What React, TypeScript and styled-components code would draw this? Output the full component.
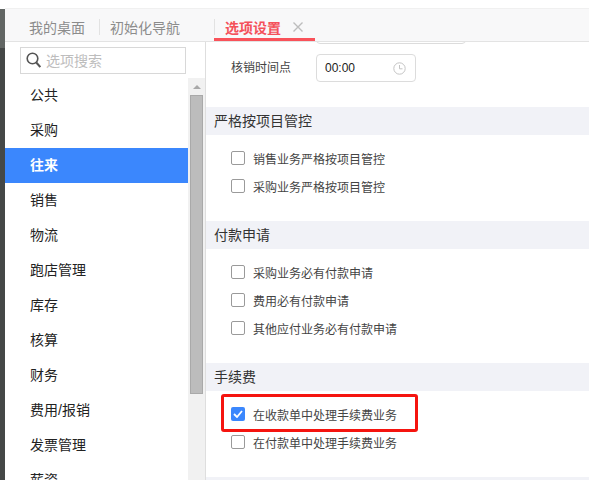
import React from "react";
import styled, { createGlobalStyle } from "styled-components";

const Global = createGlobalStyle`
  html, body { margin: 0; padding: 0; background: #fff; }
  body { font-family: "Liberation Sans", "Noto Sans CJK SC", sans-serif; }
`;
const Page = styled.div`
  width: 589px; height: 480px; overflow: hidden; display: flex; flex-direction: column; background: #fff; position: relative;
`;
const TopGap = styled.div`height: 8px; background: #fff; flex: none;`;
const Main = styled.div`flex: 1; display: flex; min-height: 0;`;
const DarkStrip = styled.div`
  width: 5px; flex: none; margin-top: 1px; background: linear-gradient(#626664 0, #626664 39px, #454847 39px);
`;
const Right = styled.div`flex: 1; min-width: 0; display: flex; flex-direction: column;`;
const TabBar = styled.div`
  height: 34px; flex: none; display: flex; align-items: center; background: #f8f8f9; box-sizing: border-box;
  border-top: 1px solid #f0f0f0; border-bottom: 1px solid #e3e3e3; padding: 4px 0 0 24px;
`;
const Tab = styled.div<{ $active?: boolean }>`
  font-size: 14px; color: ${p => p.$active ? "#f4505a" : "#8c8c8c"}; font-weight: ${p => p.$active ? 700 : 400};
`;
const Sep = styled.div<{ $before: number; $after: number }>`
  width: 1px; height: 16px; background: #e2e2e2; flex: none;
  margin: 0 ${p => p.$after}px 0 ${p => p.$before}px;
`;
const ActiveTab = styled.div`
  height: 100%; display: flex; align-items: center; width: 101px; box-sizing: border-box; padding: 2px 0 0 11px;
  border-bottom: 3px solid #f9525a; gap: 12px; flex: none;
`;
const Body = styled.div`flex: 1; display: flex; min-height: 0;`;
const Sidebar = styled.div`
  width: 200px; flex: none; display: flex; flex-direction: column; border-right: 1px solid #dedede; box-sizing: content-box;
`;
const SearchBox = styled.div`
  width: 166px; height: 27px; margin: 5px 0 0 15px; border: 1px solid #d8d8d8; display: flex; align-items: center;
  gap: 5px; padding: 0 0 1px 5px; box-sizing: border-box; font-size: 14px; color: #bdbdbd; flex: none;
`;
const SideMain = styled.div`flex: 1; display: flex; min-height: 0; margin-top: 4px; overflow: hidden;`;
const Menu = styled.div`width: 183px; flex: none;`;
const MenuItem = styled.div<{ $active?: boolean }>`
  height: 35px; line-height: 35px; padding-left: 25px; font-size: 14px;
  font-weight: ${p => p.$active ? 700 : 400};
  color: ${p => p.$active ? "#fff" : "#222"}; background: ${p => p.$active ? "#3b87fd" : "transparent"};
`;
const Track = styled.div`
  width: 17px; flex: none; background: #f1f1f1; display: flex; flex-direction: column; align-items: center;
`;
const Arrow = styled.div`
  flex: none; height: 17px; width: 100%; display: flex; align-items: center; justify-content: center;
  &::before { content: ""; border: 4px solid transparent; border-top: 0; border-bottom: 4px solid #a8a8a8; }
`;
const Thumb = styled.div`
  width: 13px; height: 299px; background: #bcbcbc; border: 1px solid #a9a9a9; box-sizing: border-box; flex: none;
`;
const Content = styled.div`flex: 1; min-width: 0; display: flex; flex-direction: column; overflow: hidden;`;
const TimeRow = styled.div`
  height: 65px; flex: none; position: relative; display: flex; align-items: flex-start; padding: 12px 0 0 25px; gap: 25px; box-sizing: border-box;
  font-size: 12px; color: #444;
`;
const ClippedInput = styled.div`
  position: absolute; left: 110px; top: -20px; width: 150px; height: 22px; border: 1px solid #dcdcdc; border-radius: 4px; box-sizing: border-box;
`;
const RowLabel = styled.div`line-height: 28px;`;
const TimeInput = styled.div`
  width: 100px; height: 28px; border: 1px solid #dcdcdc; border-radius: 4px; display: flex; align-items: center;
  justify-content: space-between; padding: 0 9px 0 8px; font-size: 12px; color: #222; box-sizing: border-box;
`;
const SectionTitle = styled.div`
  height: 28px; flex: none; line-height: 28px; background: #f1f2f7; padding-left: 8px; font-size: 14px; color: #333;
`;
const SectionBody = styled.div<{ $h: number }>`
  height: ${p => p.$h}px; flex: none; padding-top: 9px; box-sizing: border-box; display: flex; flex-direction: column;
`;
const CheckRow = styled.div`
  height: 28px; display: flex; align-items: center; padding-left: 25px; gap: 8px; font-size: 12px; color: #444;
`;
const Box = styled.span<{ $on?: boolean }>`
  width: 14px; height: 14px; flex: none; border-radius: 2px; display: flex; align-items: center; justify-content: center;
  box-sizing: border-box;
  ${p => p.$on ? "background:#3b87fd;" : "border: 1px solid #9a9a9a;"}
`;
const Highlight = styled.div`
  position: absolute; left: 221px; top: 394px; width: 197px; height: 38px; border: 3px solid #f5140f;
  border-radius: 3px; box-sizing: border-box;
`;
const Check = ({ on, children }: { on?: boolean; children: React.ReactNode }) => (
  <CheckRow>
    <Box $on={on}>
      {on && <svg width="10" height="8" viewBox="0 0 10 8"><path d="M1 4l3 3 5-6" stroke="#fff" strokeWidth="1.8" fill="none" /></svg>}
    </Box>
    {children}
  </CheckRow>
);
const items = ["公共","采购","往来","销售","物流","跑店管理","库存","核算","财务","费用/报销","发票管理","薪资"];
export default function App() {
  return (
    <Page>
      <Global />
      <TopGap />
      <Main>
        <DarkStrip />
        <Right>
          <TabBar>
            <Tab>我的桌面</Tab>
            <Sep $before={14} $after={10} />
            <Tab>初始化导航</Tab>
            <Sep $before={34} $after={-1} />
            <ActiveTab>
              <Tab $active>选项设置</Tab>
              <svg width="10" height="10" viewBox="0 0 10 10"><path d="M0.5 0.5l9 9M9.5 0.5l-9 9" stroke="#bdbdbd" strokeWidth="1.4" /></svg>
            </ActiveTab>
          </TabBar>
          <Body>
            <Sidebar>
              <SearchBox>
                <svg width="15" height="16" viewBox="0 0 15 16"><circle cx="6.5" cy="6.5" r="5.3" stroke="#555" strokeWidth="1.6" fill="none" /><path d="M10.3 10.5l4 4.5" stroke="#555" strokeWidth="2" /></svg>
                选项搜索
              </SearchBox>
              <SideMain>
                <Menu>{items.map((t, i) => <MenuItem key={t} $active={i === 2}>{t}</MenuItem>)}</Menu>
                <Track><Arrow /><Thumb /></Track>
              </SideMain>
            </Sidebar>
            <Content>
              <TimeRow>
                <ClippedInput />
                <RowLabel>核销时间点</RowLabel>
                <TimeInput>00:00
                  <svg width="13" height="13" viewBox="0 0 13 13"><circle cx="6.5" cy="6.5" r="5.7" stroke="#c4c4c4" fill="none" /><path d="M6.5 3v3.8h3" stroke="#c4c4c4" fill="none" /></svg>
                </TimeInput>
              </TimeRow>
              <SectionTitle>严格按项目管控</SectionTitle>
              <SectionBody $h={86}>
                <Check>销售业务严格按项目管控</Check>
                <Check>采购业务严格按项目管控</Check>
              </SectionBody>
              <SectionTitle>付款申请</SectionTitle>
              <SectionBody $h={114}>
                <Check>采购业务必有付款申请</Check>
                <Check>费用必有付款申请</Check>
                <Check>其他应付业务必有付款申请</Check>
              </SectionBody>
              <SectionTitle>手续费</SectionTitle>
              <SectionBody $h={86}>
                <Check on>在收款单中处理手续费业务</Check>
                <Check>在付款单中处理手续费业务</Check>
              </SectionBody>
              <SectionTitle />
            </Content>
          </Body>
        </Right>
      </Main>
      <Highlight />
    </Page>
  );
}
